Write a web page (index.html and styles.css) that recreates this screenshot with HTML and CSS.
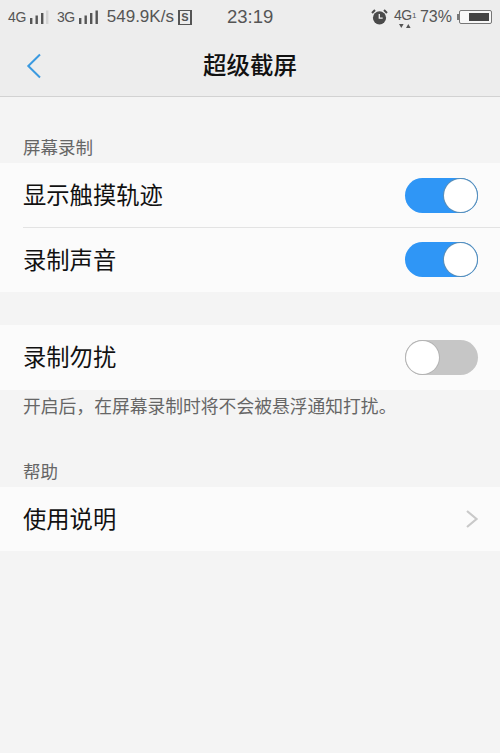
FILE: index.html
```html
<!DOCTYPE html>
<html lang="zh-CN">
<head>
<meta charset="utf-8">
<title>超级截屏</title>
<link rel="stylesheet" href="styles.css">
</head>
<body>
<div class="top">
  <div class="status">
    <div class="st-left">
      <span class="net">4G</span>
      <svg class="sig" width="20" height="15" viewBox="0 0 20 15"><rect x="0" y="8" width="2.4" height="6" fill="#555"/><rect x="5.500" y="5.500" width="2.4" height="8.5" fill="#555"/><rect x="11" y="3" width="2.4" height="11" fill="#555"/><rect x="16" y="0.5" width="2.4" height="13.5" fill="#d4d4d4"/></svg>
      <span class="net net2">3G</span>
      <svg class="sig" width="20" height="15" viewBox="0 0 20 15"><rect x="0" y="8" width="2.4" height="6" fill="#555"/><rect x="5.500" y="5.500" width="2.4" height="8.5" fill="#555"/><rect x="11" y="3" width="2.4" height="11" fill="#555"/><rect x="16.500" y="0.5" width="2.4" height="13.5" fill="#555"/></svg>
      <span class="speed">549.9K/s</span>
      <span class="sbox">S</span>
    </div>
    <span class="time">23:19</span>
    <div class="st-right">
      <svg width="17" height="16" viewBox="0 0 17 16"><circle cx="8.5" cy="8.8" r="6.6" fill="#4a4a4a"/><path d="M1 4 4 1M16 4l-3-3" stroke="#4a4a4a" stroke-width="2" fill="none"/><path d="M8.3 5v4.2h3.4" stroke="#eee" stroke-width="1.3" fill="none"/></svg>
      <div class="lte"><span class="lte-t">4G</span><span class="lte-n">1</span><svg class="lte-a" width="12" height="6" viewBox="0 0 12 6"><path d="M0 1h4.6L2.3 5zM7 5h4.6L9.300 1z" fill="#555"/></svg></div>
      <span class="pct">73%</span>
      <div class="batt"><span class="batt-cap"></span><div class="batt-body"><span class="batt-fill"></span></div></div>
    </div>
  </div>
  <header class="nav">
    <svg class="back" width="16" height="26" viewBox="0 0 16 26"><path d="M14 1.500 2.300 13 14 24.500" fill="none" stroke="#3b9ae0" stroke-width="2"/></svg>
    <h1>超级截屏</h1>
  </header>
</div>

<main>
  <div class="label first">屏幕录制</div>
  <section class="group">
    <div class="row line"><span class="txt">显示触摸轨迹</span><span class="sw on"><i></i></span></div>
    <div class="row"><span class="txt">录制声音</span><span class="sw on"><i></i></span></div>
  </section>
  <section class="group g2">
    <div class="row"><span class="txt">录制勿扰</span><span class="sw off"><i></i></span></div>
  </section>
  <p class="note">开启后，在屏幕录制时将不会被悬浮通知打扰。</p>
  <div class="label second">帮助</div>
  <section class="group">
    <div class="row"><span class="txt">使用说明</span>
      <svg class="chev" width="14" height="20" viewBox="0 0 14 20"><path d="M2 2l9.500 8L2 18" fill="none" stroke="#c9c9c9" stroke-width="2.200"/></svg>
    </div>
  </section>
</main>
</body>
</html>
```
FILE: styles.css
```css
* { box-sizing: border-box; }
html, body { margin: 0; padding: 0; }
body {
  width: 500px;
  height: 753px;
  overflow: hidden;
  background: #f4f4f4;
  color: #111;
  font-family: "Noto Sans CJK SC", "Liberation Sans", sans-serif;
}
.top {
  height: 97px;
  background: #ededed;
  border-bottom: 1px solid #d2d2d2;
}
.status {
  height: 34px;
  position: relative;
  display: flex;
  align-items: center;
  justify-content: space-between;
  padding: 0 8px 0 8px;
  font-family: "Liberation Sans", sans-serif;
  color: #555;
}
.st-left, .st-right { display: flex; align-items: center; }
.net { font-size: 14px; letter-spacing: -0.4px; }
.net2 { margin-left: 7px; }
.sig { margin-left: 4px; }
.speed { font-size: 17px; margin-left: 8px; }
.sbox {
  width: 14px;
  height: 15px;
  margin-left: 4px;
  border: solid #555;
  border-width: 1.500px 2px;
  font-size: 11px;
  font-weight: 700;
  line-height: 12px;
  text-align: center;
}
.time {
  position: absolute;
  left: 227px;
  top: 6px;
  font-size: 18.500px;
  line-height: 22px;
}
.st-right svg { display: block; }
.lte { position: relative; width: 23px; height: 26px; margin-left: 6px; }
.lte-t { position: absolute; left: 0; top: 3px; font-size: 14px; line-height: 16px; letter-spacing: -0.5px; }
.lte-n { position: absolute; left: 18px; top: 7px; font-size: 8px; line-height: 10px; }
.lte-a { position: absolute; left: 5px; top: 19px; }
.pct { font-size: 16px; margin-left: 3px; }
.batt { display: flex; align-items: center; margin-left: 5px; }
.batt-cap { width: 2px; height: 6px; background: #777; }
.batt-body {
  width: 33px;
  height: 14px;
  border: 1px solid #777;
  border-radius: 2px;
  padding: 2px 2px 2px 9px;
  background: #f7f7f7;
}
.batt-fill { display: block; height: 100%; background: #444; }
.nav {
  height: 62px;
  display: flex;
  align-items: center;
  justify-content: center;
  position: relative;
}
.back { position: absolute; left: 26px; top: 19px; }
.nav h1 { margin: -3px 0 0; font-size: 23.500px; font-weight: 500; line-height: 62px; }
.label {
  font-size: 17.500px;
  line-height: 24px;
  color: #666;
  padding-left: 23px;
}
.label.first { margin-top: 38px; height: 28px; }
.label.second { margin-top: 42px; height: 28px; }
.group { background: #fbfbfb; }
.g2 { margin-top: 33px; }
.row {
  height: 64.500px;
  display: flex;
  align-items: center;
  justify-content: space-between;
  padding: 0 22px 0 23px;
  font-size: 23.300px;
}
.txt { margin-top: -2px; }
.line { position: relative; }
.line::after {
  content: "";
  position: absolute;
  left: 23px;
  right: 0;
  bottom: 0;
  height: 1px;
  background: #e3e3e3;
}
.sw {
  width: 73px;
  height: 35px;
  border-radius: 18px;
  display: flex;
  align-items: center;
  padding: 1px;
}
.sw i { display: block; width: 33px; height: 33px; border-radius: 50%; background: #fff; }
.sw.on { background: #2f96f6; justify-content: flex-end; }
.sw.on i { box-shadow: 0 0 0 1px #5b8fb8; }
.sw.off { background: #c6c6c6; }
.sw.off i { box-shadow: 0 0 0 1px #b4b4b4; }
.chev { margin-right: -1px; }
.note {
  margin: 3px 0 0;
  padding-left: 23px;
  font-size: 17.800px;
  line-height: 24px;
  color: #666;
}
```
